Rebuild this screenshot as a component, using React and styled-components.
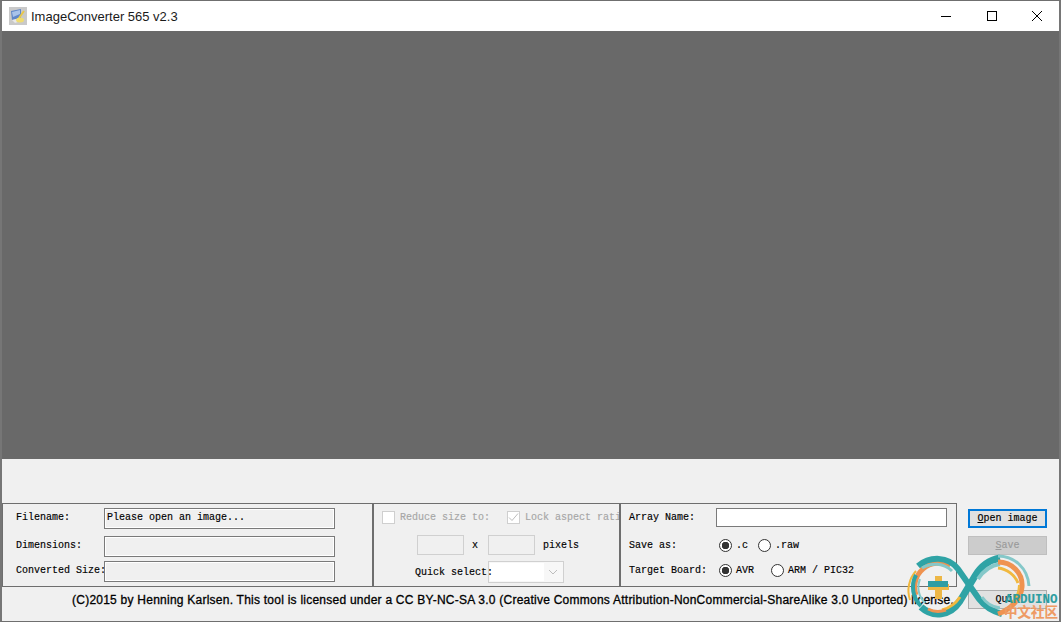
import React from "react";
import styled, { createGlobalStyle } from "styled-components";

const GlobalStyle = createGlobalStyle`
  html, body {
    margin: 0;
    padding: 0;
    background: #f0f0f0;
  }
  * {
    box-sizing: border-box;
  }
`;

export default function App() {
  return (
    <>
      <GlobalStyle />
      <Window>
        <TitleBar>
          <AppIcon width="18" height="18" viewBox="0 0 18 18">
            <rect width="18" height="18" fill="#c9c9c9" />
            <path d="M2 4l10-2v9L3 13z" fill="#5f86c8" />
            <path d="M3 5l8-2v4l-7 3z" fill="#a9c3ea" />
            <path d="M3 13l9-2 3 2-9 3z" fill="#e8e8e8" />
            <path d="M10 11l5-7" stroke="#e8c84a" strokeWidth="2" />
            <ellipse cx="11" cy="13" rx="4" ry="2.5" fill="#f0dc70" />
          </AppIcon>
          <Title>ImageConverter 565 v2.3</Title>
          <WindowButtons>
            <WindowButton>
              <svg width="12" height="12" viewBox="0 0 12 12">
                <path d="M1 6.5h10" stroke="#000" fill="none" />
              </svg>
            </WindowButton>
            <WindowButton>
              <svg width="12" height="12" viewBox="0 0 12 12">
                <rect x="1.5" y="1.5" width="9" height="9" stroke="#000" fill="none" />
              </svg>
            </WindowButton>
            <CloseButton>
              <svg width="12" height="12" viewBox="0 0 12 12">
                <path d="M1 1l10 10M11 1L1 11" stroke="#000" fill="none" />
              </svg>
            </CloseButton>
          </WindowButtons>
        </TitleBar>
        <Canvas />
        <Spacer />
        <Controls>
          <Panels>
            <FilePanel>
              <FieldRow>
                <FieldLabel>Filename:</FieldLabel>
                <ReadOnlyBox>Please open an image...</ReadOnlyBox>
              </FieldRow>
              <FieldRow $top={7}>
                <FieldLabel>Dimensions:</FieldLabel>
                <ReadOnlyBox />
              </FieldRow>
              <FieldRow $top={4}>
                <FieldLabel>Converted Size:</FieldLabel>
                <ReadOnlyBox />
              </FieldRow>
            </FilePanel>
            <SizePanel>
              <CheckRow>
                <CheckItem>
                  <CheckBox />
                  Reduce size to:
                </CheckItem>
                <CheckItem>
                  <CheckBox>
                    <svg width="11" height="11" viewBox="0 0 11 11">
                      <path d="M1 5.5l3 3 6-7" stroke="#bdbdbd" fill="none" />
                    </svg>
                  </CheckBox>
                  Lock aspect ratio
                </CheckItem>
              </CheckRow>
              <SizeRow>
                <SizeInput />
                <Times>x</Times>
                <SizeInput />
                <span>pixels</span>
              </SizeRow>
              <QuickRow>
                <QuickLabel>Quick select:</QuickLabel>
                <Select>
                  <SelectValue />
                  <svg width="10" height="6" viewBox="0 0 10 6">
                    <path d="M1 1l4 4 4-4" stroke="#bdbdbd" fill="none" />
                  </svg>
                </Select>
              </QuickRow>
            </SizePanel>
            <OutputPanel>
              <FieldRow>
                <OutputLabel>Array Name:</OutputLabel>
                <TextInput />
              </FieldRow>
              <FieldRow $top={7}>
                <OutputLabel>Save as:</OutputLabel>
                <Choices>
                  <RadioItem $width={39}>
                    <Radio $checked />
                    .c
                  </RadioItem>
                  <RadioItem>
                    <Radio />
                    .raw
                  </RadioItem>
                </Choices>
              </FieldRow>
              <FieldRow $top={4}>
                <OutputLabel>Target Board:</OutputLabel>
                <Choices>
                  <RadioItem $width={52}>
                    <Radio $checked />
                    AVR
                  </RadioItem>
                  <RadioItem>
                    <Radio />
                    ARM / PIC32
                  </RadioItem>
                </Choices>
              </FieldRow>
            </OutputPanel>
          </Panels>
          <Actions>
            <PrimaryButton>
              <u>O</u>pen image
            </PrimaryButton>
            <DisabledButton>
              <u>S</u>ave
            </DisabledButton>
          </Actions>
        </Controls>
        <Footer>
          <License>
            (C)2015 by Henning Karlsen. This tool is licensed under a CC BY-NC-SA 3.0 (Creative
            Commons Attribution-NonCommercial-ShareAlike 3.0 Unported) license.
          </License>
          <QuitButton>Quit</QuitButton>
        </Footer>
        <Watermark>
          <svg width="155" height="69" viewBox="0 0 155 69" fill="none">
            <g strokeLinecap="butt">
              <path d="M4 47A29 29 0 0 1 10 18" stroke="#f1b83e" strokeWidth="2" />
              <path d="M10 42A24 24 0 0 1 44 13" stroke="#ef9350" strokeWidth="5" />
              <path d="M15 53A26 26 0 0 1 10 22" stroke="#2fa3a5" strokeWidth="4" />
              <path d="M19 50A22 22 0 0 1 14 26" stroke="#85c8c9" strokeWidth="2" />
              <path d="M12 13C24 3 42 3 52 16L73 46C79 54 85 58 96 61" stroke="#2fa3a5" strokeWidth="6" />
              <path d="M15 54C27 65 44 63 54 48L69 23C75 13 83 7 94 5" stroke="#2fa3a5" strokeWidth="7" />
              <path d="M36 57C44 55 50 50 54 44" stroke="#f1b83e" strokeWidth="3" />
              <path d="M22 56C28 59 34 59 40 57" stroke="#ef9350" strokeWidth="3" />
              <path d="M16 15C26 9 38 10 46 18" stroke="#85c8c9" strokeWidth="3" />
              <path d="M72 26C78 17 86 12 94 11" stroke="#85c8c9" strokeWidth="4" />
              <path d="M92 3C108 3 122 15 123 33" stroke="#85c8c9" strokeWidth="3" />
              <path d="M92 9C106 9 117 20 116 34C115 46 104 57 92 61" stroke="#ef9350" strokeWidth="5" />
              <path d="M92 15C101 16 109 22 112 30" stroke="#f1b83e" strokeWidth="3" />
              <path d="M106 49C111 44 113 38 113 32" stroke="#f1b83e" strokeWidth="2" />
              <path d="M76 44C80 50 86 54 94 55" stroke="#85c8c9" strokeWidth="3" />
            </g>
            <path d="M29 23h7v8h7v6h-7v9h-7v-9h-7v-6h7z" fill="#edb746" />
            <path d="M22 28h20v6H22z" fill="#2f9da3" />
          </svg>
          <WatermarkTitle>ARDUINO</WatermarkTitle>
          <WatermarkCn>中文社区</WatermarkCn>
        </Watermark>
      </Window>
    </>
  );
}

const Window = styled.div`
  position: relative;
  width: 1061px;
  height: 622px;
  display: flex;
  flex-direction: column;
  background: #f0f0f0;
  border-left: 2px solid #767676;
  border-right: 2px solid #767676;
  border-top: 1px solid #6f6f6f;
  border-bottom: 1px solid #6f6f6f;
  overflow: hidden;
  font-family: "Liberation Mono", monospace;
  font-size: 10px;
  -webkit-text-stroke: 0.15px;
  color: #000;
`;
const TitleBar = styled.div`
  height: 30px;
  flex: none;
  display: flex;
  align-items: center;
  background: #fff;
  padding-left: 7px;
`;
const AppIcon = styled.svg`
  margin-right: 4px;
`;
const Title = styled.span`
  font-family: "Liberation Sans", sans-serif;
  font-size: 13px;
  -webkit-text-stroke: 0;
  color: #1a1a1a;
`;
const WindowButtons = styled.div`
  margin-left: auto;
  display: flex;
`;
const WindowButton = styled.div`
  width: 46px;
  height: 30px;
  display: flex;
  align-items: center;
  justify-content: center;
`;
const CloseButton = styled(WindowButton)`
  width: 44px;
`;
const Canvas = styled.div`
  height: 428px;
  flex: none;
  background: #696969;
`;
const Spacer = styled.div`
  height: 44px;
  flex: none;
`;
const Controls = styled.div`
  display: flex;
  flex: none;
  height: 84px;
`;
const Panels = styled.div`
  display: grid;
  grid-template-columns: 371px 247px 335px;
  height: 84px;
  border: 1px solid #6e6e6e;
  width: 955px;
  flex: none;
`;
const FilePanel = styled.div`
  display: flex;
  flex-direction: column;
  padding: 4px 0 0 13px;
  border-right: 2px solid #6e6e6e;
`;
const FieldRow = styled.div`
  display: flex;
  align-items: center;
  height: 21px;
  flex: none;
  margin-top: ${(props) => props.$top || 0}px;
`;
const FieldLabel = styled.span`
  width: 88px;
  flex: none;
  white-space: nowrap;
  padding-bottom: 3px;
`;
const ReadOnlyBox = styled.div`
  width: 231px;
  height: 21px;
  border: 1px solid #7a7a7a;
  box-shadow: inset 0 0 0 1px #fff;
  padding: 3px 2px;
`;
const SizePanel = styled.div`
  display: flex;
  flex-direction: column;
  border-right: 2px solid #6e6e6e;
  overflow: hidden;
  padding: 7px 0 0 8px;
`;
const CheckRow = styled.div`
  display: flex;
  gap: 17px;
  white-space: nowrap;
  color: #a6a6a6;
`;
const CheckItem = styled.div`
  display: flex;
  align-items: center;
  gap: 5px;
`;
const CheckBox = styled.div`
  width: 13px;
  height: 13px;
  border: 1px solid #cfcfcf;
  background: #fff;
  display: flex;
  align-items: center;
  justify-content: center;
  flex: none;
`;
const SizeRow = styled.div`
  display: flex;
  align-items: center;
  margin: 11px 0 0 35px;
  gap: 8px;
`;
const Times = styled.span`
  margin-right: 2px;
`;
const SizeInput = styled.div`
  width: 47px;
  height: 20px;
  border: 1px solid #d0d0d0;
`;
const QuickRow = styled.div`
  display: flex;
  align-items: center;
  margin: 6px 0 0 33px;
`;
const QuickLabel = styled.span`
  position: relative;
  z-index: 1;
`;
const Select = styled.div`
  width: 76px;
  height: 22px;
  margin-left: -5px;
  border: 1px solid #d0d0d0;
  display: flex;
  align-items: center;
  padding: 1px 5px 1px 1px;
  justify-content: space-between;
  background: #f7f7f7;
`;
const SelectValue = styled.div`
  width: 54px;
  height: 100%;
  background: #fff;
`;
const OutputPanel = styled.div`
  display: flex;
  flex-direction: column;
  padding: 4px 0 0 8px;
`;
const OutputLabel = styled.span`
  width: 87px;
  flex: none;
  padding-bottom: 3px;
`;
const TextInput = styled.div`
  width: 231px;
  height: 19px;
  margin-bottom: 2px;
  background: #fff;
  border: 1px solid #7a7a7a;
`;
const Choices = styled.div`
  display: flex;
  padding: 0 0 3px 3px;
`;
const RadioItem = styled.div`
  display: flex;
  align-items: center;
  gap: 4px;
  width: ${(props) => (props.$width ? `${props.$width}px` : "auto")};
`;
const Radio = styled.div`
  width: 13px;
  height: 13px;
  border-radius: 50%;
  border: 1px solid #333;
  background: ${(props) =>
    props.$checked ? "radial-gradient(circle, #333 0 3.5px, #fff 4px)" : "#fff"};
`;
const Actions = styled.div`
  display: flex;
  flex-direction: column;
  align-items: flex-start;
  padding: 6px 0 0 11px;
  gap: 8px;
`;
const Button = styled.div`
  width: 79px;
  height: 19px;
  display: flex;
  align-items: center;
  justify-content: center;
  white-space: pre;
  background: #e1e1e1;
  border: 1px solid #adadad;
`;
const PrimaryButton = styled(Button)`
  border: 2px solid #0078d7;
`;
const DisabledButton = styled(Button)`
  background: #cccccc;
  border-color: #bfbfbf;
  color: #9a9a9a;
`;
const Footer = styled.div`
  flex: 1;
  display: flex;
  position: relative;
`;
const License = styled.div`
  margin: 6px 0 0 70px;
  width: 890px;
  height: 14px;
  flex: none;
  white-space: nowrap;
  overflow: hidden;
  font-family: "Liberation Sans", sans-serif;
  font-size: 12px;
  letter-spacing: 0.24px;
  line-height: 14px;
  -webkit-text-stroke: 0.3px #000;
`;
const QuitButton = styled(Button)`
  margin: 3px 0 0 6px;
`;
const Watermark = styled.div`
  position: absolute;
  left: 904px;
  top: 552px;
  width: 155px;
  height: 69px;
  pointer-events: none;
`;
const WatermarkTitle = styled.div`
  position: absolute;
  left: 99px;
  top: 40px;
  font-family: "Liberation Mono", monospace;
  font-size: 12.5px;
  line-height: 14px;
  font-weight: bold;
  color: #2d9da0;
`;
const WatermarkCn = styled.div`
  position: absolute;
  left: 98px;
  top: 50px;
  font-family: "Noto Sans CJK SC", sans-serif;
  font-size: 13.5px;
  font-weight: bold;
  line-height: 16px;
  color: #ee9a63;
`;
